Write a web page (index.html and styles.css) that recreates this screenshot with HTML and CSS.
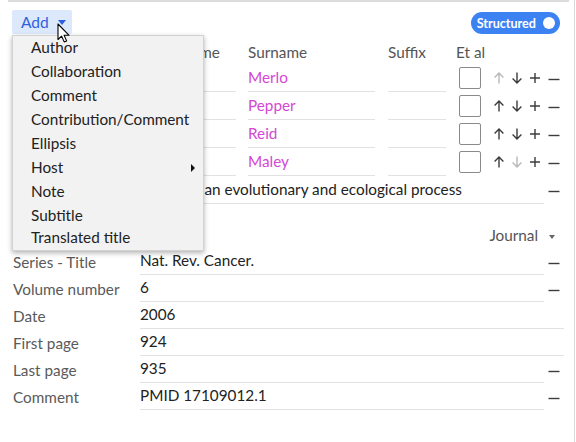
FILE: index.html
```html
<!DOCTYPE html>
<html lang="en">
<head>
  <meta charset="UTF-8">
  <title>Reference editor</title>
  <link rel="stylesheet" href="styles.css">
</head>
<body>
  <div class="frame">
    <div class="panel">
      <div class="toolbar">
        <button class="add-btn">Add <span class="caret"></span></button>
        <div class="toggle">Structured <span class="knob"></span></div>
      </div>

      <div class="row head">
        <div class="label"></div>
        <div class="given">Given name</div>
        <div class="surname">Surname</div>
        <div class="suffix">Suffix</div>
        <div class="etal">Et al</div>
      </div>

      <div class="row author">
        <div class="label">Author</div>
        <div class="given field">Lauren</div>
        <div class="surname field name">Merlo</div>
        <div class="suffix field"></div>
        <div class="etal"><span class="check"></span></div>
        <div class="actions">
          <span class="act off"><svg viewBox="0 0 12 12"><path d="M6 11.5V1M1.6 5.4L6 1l4.4 4.4"/></svg></span>
          <span class="act"><svg viewBox="0 0 12 12"><path d="M6 .5V11M1.6 6.6L6 11l4.4-4.4"/></svg></span>
          <span class="act"><svg viewBox="0 0 12 12"><path d="M6 1v10M1 6h10"/></svg></span>
          <span class="act minus"><svg viewBox="0 0 12 12"><path d="M0.5 7.5h11"/></svg></span>
        </div>
      </div>
      <div class="row author">
        <div class="label">Author</div>
        <div class="given field">John</div>
        <div class="surname field name">Pepper</div>
        <div class="suffix field"></div>
        <div class="etal"><span class="check"></span></div>
        <div class="actions">
          <span class="act"><svg viewBox="0 0 12 12"><path d="M6 11.5V1M1.6 5.4L6 1l4.4 4.4"/></svg></span>
          <span class="act"><svg viewBox="0 0 12 12"><path d="M6 .5V11M1.6 6.6L6 11l4.4-4.4"/></svg></span>
          <span class="act"><svg viewBox="0 0 12 12"><path d="M6 1v10M1 6h10"/></svg></span>
          <span class="act minus"><svg viewBox="0 0 12 12"><path d="M0.5 7.5h11"/></svg></span>
        </div>
      </div>
      <div class="row author">
        <div class="label">Author</div>
        <div class="given field">Brian</div>
        <div class="surname field name">Reid</div>
        <div class="suffix field"></div>
        <div class="etal"><span class="check"></span></div>
        <div class="actions">
          <span class="act"><svg viewBox="0 0 12 12"><path d="M6 11.5V1M1.6 5.4L6 1l4.4 4.4"/></svg></span>
          <span class="act"><svg viewBox="0 0 12 12"><path d="M6 .5V11M1.6 6.6L6 11l4.4-4.4"/></svg></span>
          <span class="act"><svg viewBox="0 0 12 12"><path d="M6 1v10M1 6h10"/></svg></span>
          <span class="act minus"><svg viewBox="0 0 12 12"><path d="M0.5 7.5h11"/></svg></span>
        </div>
      </div>
      <div class="row author">
        <div class="label">Author</div>
        <div class="given field">Carlo</div>
        <div class="surname field name">Maley</div>
        <div class="suffix field"></div>
        <div class="etal"><span class="check"></span></div>
        <div class="actions">
          <span class="act"><svg viewBox="0 0 12 12"><path d="M6 11.5V1M1.6 5.4L6 1l4.4 4.4"/></svg></span>
          <span class="act off"><svg viewBox="0 0 12 12"><path d="M6 .5V11M1.6 6.6L6 11l4.4-4.4"/></svg></span>
          <span class="act"><svg viewBox="0 0 12 12"><path d="M6 1v10M1 6h10"/></svg></span>
          <span class="act minus"><svg viewBox="0 0 12 12"><path d="M0.5 7.5h11"/></svg></span>
        </div>
      </div>

      <div class="row title">
        <div class="label">Title</div>
        <div class="value field"><span class="tight">Cancer as</span> an evolutionary and ecological process</div>
        <span class="act minus"><svg viewBox="0 0 12 12"><path d="M0.5 7.5h11"/></svg></span>
      </div>

      <div class="host">
        <div class="label">Host</div>
        <div class="type">Journal <span class="caret grey"></span></div>
      </div>

      <div class="row field-row">
        <div class="label">Series - Title</div>
        <div class="value field">Nat. Rev. Cancer.</div>
        <span class="act minus"><svg viewBox="0 0 12 12"><path d="M0.5 7.5h11"/></svg></span>
      </div>
      <div class="row field-row">
        <div class="label">Volume number</div>
        <div class="value field">6</div>
        <span class="act minus"><svg viewBox="0 0 12 12"><path d="M0.5 7.5h11"/></svg></span>
      </div>
      <div class="row field-row">
        <div class="label">Date</div>
        <div class="value field">2006</div>
      </div>
      <div class="row field-row">
        <div class="label">First page</div>
        <div class="value field">924</div>
      </div>
      <div class="row field-row">
        <div class="label">Last page</div>
        <div class="value field">935</div>
        <span class="act minus"><svg viewBox="0 0 12 12"><path d="M0.5 7.5h11"/></svg></span>
      </div>
      <div class="row field-row">
        <div class="label">Comment</div>
        <div class="value field">PMID 17109012.1</div>
        <span class="act minus"><svg viewBox="0 0 12 12"><path d="M0.5 7.5h11"/></svg></span>
      </div>
    </div>

    <!-- open Add menu -->
    <ul class="menu">
      <li>Author</li>
      <li>Collaboration</li>
      <li>Comment</li>
      <li>Contribution/Comment</li>
      <li>Ellipsis</li>
      <li class="sub">Host</li>
      <li>Note</li>
      <li>Subtitle</li>
      <li>Translated title</li>
    </ul>

    <svg class="pointer" viewBox="0 0 14 20" width="14" height="20">
      <path d="M1 1v15.5l3.6-3.4 2.6 5.8 2.4-1-2.5-5.6h5z" fill="#fff" stroke="#000" stroke-width="1.1" stroke-linejoin="round"/>
    </svg>
  </div>
</body>
</html>
```

FILE: styles.css
```css
body {
  margin: 0;
  font-family: Lato, "Liberation Sans", sans-serif;
  font-size: 15.3px;
  color: #222;
  background: #fff;
}
.frame {
  position: relative;
  width: 575px;
  height: 442px;
  border-right: 1px solid #d8d8d8;
  box-sizing: border-box;
}
.panel {
  margin-left: 8px;
  width: 561px;
  border-top: 2px solid #dcdcdc;
  padding: 0 5px;
  box-sizing: border-box;
}
.toolbar {
  display: flex;
  justify-content: space-between;
  align-items: center;
  padding-top: 8px;
}
.add-btn {
  margin-left: -1px;
  height: 24px;
  width: 60px;
  padding: 0 0 0 9px;
  border: none;
  border-radius: 2px;
  background: #dce8fb;
  color: #2d5fe0;
  font: inherit;
  font-size: 15.5px;
  text-align: left;
  display: flex;
  align-items: center;
}
.caret {
  display: inline-block;
  margin-left: 9px;
  border-left: 4px solid transparent;
  border-right: 4px solid transparent;
  border-top: 5px solid #2d5fe0;
}
.caret.grey {
  margin-left: 7px;
  border-left-width: 3px;
  border-right-width: 3px;
  border-top: 4px solid #666;
  vertical-align: middle;
}
.toggle {
  margin-top: 2px;
  margin-right: 4px;
  height: 22px;
  padding: 0 5px 0 6px;
  border-radius: 11px;
  background: #3d82f3;
  color: #fff;
  font-size: 12.6px;
  font-weight: bold;
  display: flex;
  align-items: center;
}
.knob {
  width: 12px;
  height: 12px;
  margin-left: 7px;
  border-radius: 50%;
  background: #fff;
}

.row {
  display: flex;
  align-items: center;
  height: 28px;
}
.label {
  width: 127px;
  flex: none;
  color: #5a5a5a;
}
.head {
  margin-top: 6px;
  height: 24px;
  color: #555;
}
.given {
  width: 96px;
  margin-right: 12px;
}
.surname {
  width: 127px;
  margin-right: 13px;
}
.suffix {
  width: 58px;
  margin-right: 13px;
}
.etal {
  width: 31px;
  flex: none;
}
.head .etal {
  margin-left: -3px;
  margin-right: 3px;
}
.field {
  height: 28px;
  line-height: 26px;
  box-sizing: border-box;
  border-bottom: 1px solid #e2e2e2;
  white-space: nowrap;
  overflow: hidden;
}
.tight {
  letter-spacing: -0.5px;
}
.name {
  color: #d447d4;
}
.check {
  display: block;
  width: 20px;
  height: 20px;
  border: 1px solid #8a8a8a;
  border-radius: 2px;
  background: #fff;
}
.actions {
  display: flex;
}
.act {
  width: 18px;
  height: 18px;
  display: flex;
  align-items: center;
  justify-content: center;
  flex: none;
}
.act svg {
  width: 12px;
  height: 12px;
  fill: none;
  stroke: #3c3c3c;
  stroke-width: 1.4;
}
.act.off svg {
  stroke: #b8b8b8;
}
.act.minus {
  width: 20px;
}
.value {
  flex: 1;
}
.field-row {
  height: 27px;
}
.field-row .field {
  height: 27px;
  line-height: 25px;
}
.host {
  display: flex;
  justify-content: space-between;
  padding-top: 19px;
  height: 25px;
  line-height: 24px;
}
.type {
  color: #555;
  padding-right: 9px;
}

.menu {
  position: absolute;
  left: 12px;
  top: 35px;
  width: 192px;
  height: 216px;
  margin: 0;
  padding: 0;
  list-style: none;
  background: #f2f2f2;
  border: 1px solid #d2d2d2;
  box-sizing: border-box;
  box-shadow: 0 2px 5px rgba(0, 0, 0, 0.3);
  overflow: hidden;
}
.menu li {
  height: 24px;
  line-height: 23px;
  padding-left: 18px;
  color: #222;
}
.menu li:last-child {
  margin-top: -2px;
}
.menu .sub {
  position: relative;
}
.menu .sub::after {
  content: "";
  position: absolute;
  right: 8px;
  top: 8px;
  border-top: 4px solid transparent;
  border-bottom: 4px solid transparent;
  border-left: 4px solid #111;
}
.pointer {
  position: absolute;
  left: 57px;
  top: 23px;
}
```
